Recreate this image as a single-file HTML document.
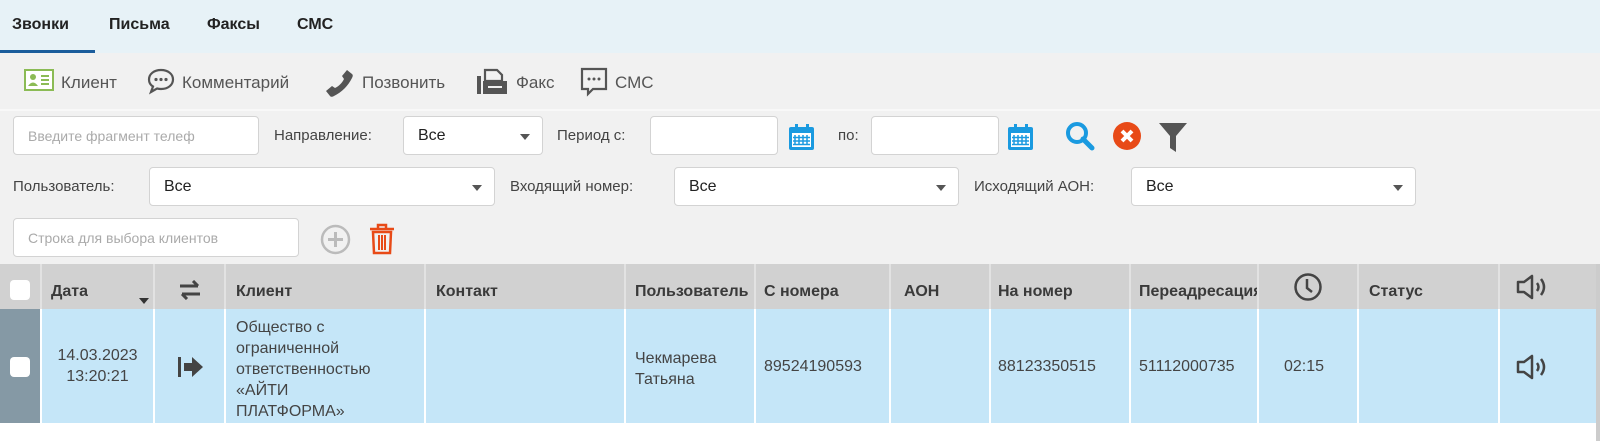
<!DOCTYPE html>
<html><head><meta charset="utf-8"><style>
*{box-sizing:border-box;margin:0;padding:0}
body{width:1600px;height:441px;overflow:hidden;background:#f1f1f1;font-family:"Liberation Sans",sans-serif;color:#333;position:relative}
.a{position:absolute}
.tabs{left:0;top:0;width:1600px;height:53px;background:#e7f2f7}
.tab{top:16px;font-weight:bold;font-size:16px;color:#222}
.tb{top:73px;font-size:17px;color:#555}
.inp{background:#fff;border:1px solid #d3d3d3;border-radius:4px;height:39px;font-size:14px;color:#aaa;padding:11px 14px;white-space:nowrap;overflow:hidden}
.sel{background:#fff;border:1px solid #d3d3d3;border-radius:4px;height:39px;font-size:16px;color:#222;padding:10px 14px}
.sel:after{content:"";position:absolute;right:12px;top:17px;border-left:5px solid transparent;border-right:5px solid transparent;border-top:6px solid #555}
.lbl{font-size:15px;color:#444}
.hd{top:264px;height:45px;background:#d1d1d1;left:0;width:1596px}
.row{top:309px;height:114px;background:#c5e6f8;left:0;width:1596px}
.vl{width:2px;background:#fff;top:309px;height:132px}
.hv{width:2px;background:#e2e2e2;top:264px;height:45px}
.h{top:283px;font-weight:bold;font-size:16px;color:#3a3a3a;white-space:nowrap;overflow:hidden}
.c{font-size:16px;color:#444;line-height:21px}
</style></head><body>
<div class="a tabs"></div>
<div class="a" style="left:0;top:50px;width:95px;height:3px;background:#1b5d9c"></div>
<div class="a tab" style="left:12px">Звонки</div>
<div class="a tab" style="left:109px">Письма</div>
<div class="a tab" style="left:207px">Факсы</div>
<div class="a tab" style="left:297px">СМС</div>

<svg class="a" style="left:24px;top:69px" width="30" height="22" viewBox="0 0 30 22"><rect x="1" y="1" width="28" height="20" fill="#fff" stroke="#8bbb55" stroke-width="2"/><circle cx="9" cy="8" r="3" fill="#8bbb55"/><path d="M4 17 q5-7 10 0z" fill="#8bbb55"/><path d="M17 7h8M17 11h8M17 15h8" stroke="#8bbb55" stroke-width="2"/></svg>
<div class="a tb" style="left:61px">Клиент</div>
<svg class="a" style="left:146px;top:67px" width="30" height="28" viewBox="0 0 30 28"><path d="M15 3C8 3 3 7 3 12.5c0 3 1.5 5.5 4 7L5 25l6-3.5c1.3.3 2.6.5 4 .5 7 0 12-4 12-9.5S22 3 15 3z" fill="none" stroke="#555" stroke-width="2.2"/><circle cx="10" cy="12.5" r="1.6" fill="#555"/><circle cx="15" cy="12.5" r="1.6" fill="#555"/><circle cx="20" cy="12.5" r="1.6" fill="#555"/></svg>
<div class="a tb" style="left:182px">Комментарий</div>
<svg class="a" style="left:325px;top:68px" width="30" height="30" viewBox="0 0 30 30"><path d="M22 2l5 4c1 1 1 2 0 4-4 8-10 14-18 18-2 1-3 1-4 0l-4-5 6-5 3 2c4-2 7-5 9-9l-2-3z" fill="#555"/></svg>
<div class="a tb" style="left:362px">Позвонить</div>
<svg class="a" style="left:476px;top:68px" width="32" height="28" viewBox="0 0 32 28"><rect x="1" y="8" width="4" height="18" fill="#555"/><path d="M9 2h12l5 5v6H9z" fill="none" stroke="#555" stroke-width="2.2"/><rect x="7" y="13" width="24" height="13" fill="#555"/><rect x="12" y="18" width="14" height="2" fill="#f1f1f1"/></svg>
<div class="a tb" style="left:516px">Факс</div>
<svg class="a" style="left:580px;top:67px" width="28" height="30" viewBox="0 0 28 30"><path d="M2 2h24v20H13l-5 5v-5H2z" fill="none" stroke="#555" stroke-width="2.2"/><circle cx="9" cy="12" r="1.5" fill="#555"/><circle cx="14" cy="12" r="1.5" fill="#555"/><circle cx="19" cy="12" r="1.5" fill="#555"/></svg>
<div class="a tb" style="left:615px">СМС</div>
<div class="a" style="left:0;top:109px;width:1600px;height:2px;background:#f8f8f8"></div>

<div class="a inp" style="left:13px;top:116px;width:246px">Введите фрагмент телеф</div>
<div class="a lbl" style="left:274px;top:127px">Направление:</div>
<div class="a sel" style="left:403px;top:116px;width:140px">Все</div>
<div class="a lbl" style="left:557px;top:127px">Период с:</div>
<div class="a inp" style="left:650px;top:116px;width:128px"></div>
<svg class="a" style="left:787px;top:122px" width="30" height="30" viewBox="0 0 30 30"><rect x="2" y="5" width="25" height="23" rx="2" fill="#1a9ae0"/><rect x="5" y="11" width="19" height="14" fill="#fff"/><path d="M8 13v10M12 13v10M16 13v10M20 13v10M6 15.5h17M6 19h17M6 22.5h17" stroke="#1a9ae0" stroke-width="1.5"/><rect x="8" y="2" width="3" height="6" fill="#1a9ae0"/><rect x="19" y="2" width="3" height="6" fill="#1a9ae0"/></svg>
<div class="a lbl" style="left:838px;top:127px">по:</div>
<div class="a inp" style="left:871px;top:116px;width:128px"></div>
<svg class="a" style="left:1006px;top:122px" width="30" height="30" viewBox="0 0 30 30"><rect x="2" y="5" width="25" height="23" rx="2" fill="#1a9ae0"/><rect x="5" y="11" width="19" height="14" fill="#fff"/><path d="M8 13v10M12 13v10M16 13v10M20 13v10M6 15.5h17M6 19h17M6 22.5h17" stroke="#1a9ae0" stroke-width="1.5"/><rect x="8" y="2" width="3" height="6" fill="#1a9ae0"/><rect x="19" y="2" width="3" height="6" fill="#1a9ae0"/></svg>
<svg class="a" style="left:1064px;top:120px" width="32" height="32" viewBox="0 0 32 32"><circle cx="13" cy="13" r="9" fill="none" stroke="#1a9ae0" stroke-width="4"/><path d="M19 19l9 9" stroke="#1a9ae0" stroke-width="5" stroke-linecap="round"/></svg>
<svg class="a" style="left:1112px;top:121px" width="30" height="30" viewBox="0 0 30 30"><circle cx="15" cy="15" r="14" fill="#e84a17"/><path d="M10 10l10 10M20 10l-10 10" stroke="#fff" stroke-width="4"/></svg>
<svg class="a" style="left:1157px;top:121px" width="32" height="32" viewBox="0 0 32 32"><path d="M2 2h28l-11 13v16l-6-4V15z" fill="#555"/></svg>

<div class="a lbl" style="left:13px;top:178px">Пользователь:</div>
<div class="a sel" style="left:149px;top:167px;width:346px">Все</div>
<div class="a lbl" style="left:510px;top:178px">Входящий номер:</div>
<div class="a sel" style="left:674px;top:167px;width:285px">Все</div>
<div class="a lbl" style="left:974px;top:178px">Исходящий АОН:</div>
<div class="a sel" style="left:1131px;top:167px;width:285px">Все</div>

<div class="a inp" style="left:13px;top:218px;width:286px">Строка для выбора клиентов</div>
<svg class="a" style="left:320px;top:224px" width="31" height="31" viewBox="0 0 31 31"><circle cx="15.5" cy="15.5" r="13.5" fill="none" stroke="#bbb" stroke-width="2.5"/><path d="M15.5 8v15M8 15.5h15" stroke="#bbb" stroke-width="3"/></svg>
<svg class="a" style="left:368px;top:223px" width="28" height="32" viewBox="0 0 28 32"><path d="M2 6h24M10 6V2h8v4" fill="none" stroke="#e84a17" stroke-width="2.5"/><path d="M5 9h18l-1 21H6z" fill="none" stroke="#e84a17" stroke-width="2.5"/><path d="M11 12v15M14 12v15M17 12v15" stroke="#e84a17" stroke-width="2"/></svg>

<div class="a hd"></div>
<div class="a row"></div>
<div class="a" style="left:0;top:309px;width:40px;height:114px;background:#8599a5"></div>
<div class="a" style="left:0;top:423px;width:1596px;height:18px;background:#fff"></div>
<div class="a" style="left:1596px;top:264px;width:4px;height:177px;background:#ccc"></div>
<div class="a vl" style="left:40px"></div><div class="a vl" style="left:153px"></div><div class="a vl" style="left:224px"></div><div class="a vl" style="left:424px"></div><div class="a vl" style="left:624px"></div><div class="a vl" style="left:754px"></div><div class="a vl" style="left:889px"></div><div class="a vl" style="left:989px"></div><div class="a vl" style="left:1129px"></div><div class="a vl" style="left:1257px"></div><div class="a vl" style="left:1357px"></div><div class="a vl" style="left:1498px"></div>
<div class="a hv" style="left:40px"></div><div class="a hv" style="left:153px"></div><div class="a hv" style="left:224px"></div><div class="a hv" style="left:424px"></div><div class="a hv" style="left:624px"></div><div class="a hv" style="left:754px"></div><div class="a hv" style="left:889px"></div><div class="a hv" style="left:989px"></div><div class="a hv" style="left:1129px"></div><div class="a hv" style="left:1257px"></div><div class="a hv" style="left:1357px"></div><div class="a hv" style="left:1498px"></div>
<div class="a" style="left:10px;top:280px;width:20px;height:20px;border-radius:4px;background:#fff"></div>
<div class="a" style="left:10px;top:357px;width:20px;height:20px;border-radius:4px;background:#fff"></div>
<div class="a h" style="left:51px">Дата</div>
<div class="a" style="left:139px;top:298px;border-left:5px solid transparent;border-right:5px solid transparent;border-top:6px solid #333"></div>
<svg class="a" style="left:178px;top:280px" width="24" height="20" viewBox="0 0 24 20"><path d="M2 6h18M15 1l5 5M22 14H4M9 19l-5-5" stroke="#444" stroke-width="3" fill="none"/></svg>
<div class="a h" style="left:236px">Клиент</div>
<div class="a h" style="left:436px">Контакт</div>
<div class="a h" style="left:635px;width:118px">Пользователь</div>
<div class="a h" style="left:764px">С номера</div>
<div class="a h" style="left:904px">АОН</div>
<div class="a h" style="left:998px">На номер</div>
<div class="a h" style="left:1139px;width:118px">Переадресация</div>
<svg class="a" style="left:1293px;top:272px" width="30" height="30" viewBox="0 0 30 30"><circle cx="15" cy="15" r="12.5" fill="none" stroke="#444" stroke-width="2.5"/><path d="M14 7v9l5 4" fill="none" stroke="#444" stroke-width="2.5"/></svg>
<div class="a h" style="left:1369px">Статус</div>
<svg class="a" style="left:1516px;top:274px" width="32" height="26" viewBox="0 0 32 26"><path d="M2 8h6l8-6v22l-8-6H2z" fill="none" stroke="#444" stroke-width="2.5" stroke-linejoin="round"/><path d="M21 9q3 4 0 8M25 5q6 8 0 16" fill="none" stroke="#444" stroke-width="2.5"/></svg>

<div class="a c" style="left:42px;top:345px;width:111px;text-align:center">14.03.2023<br>13:20:21</div>
<svg class="a" style="left:177px;top:355px" width="28" height="24" viewBox="0 0 28 24"><rect x="1" y="2" width="3" height="20" fill="#444"/><path d="M7 8h8V2l11 10-11 10v-6H7z" fill="#444"/></svg>
<div class="a c" style="left:236px;top:317px">Общество с<br>ограниченной<br>ответственностью<br>«АЙТИ<br>ПЛАТФОРМА»</div>
<div class="a c" style="left:635px;top:348px">Чекмарева<br>Татьяна</div>
<div class="a c" style="left:764px;top:356px">89524190593</div>
<div class="a c" style="left:998px;top:356px">88123350515</div>
<div class="a c" style="left:1139px;top:356px">51112000735</div>
<div class="a c" style="left:1284px;top:356px">02:15</div>
<svg class="a" style="left:1516px;top:354px" width="32" height="26" viewBox="0 0 32 26"><path d="M2 8h6l8-6v22l-8-6H2z" fill="none" stroke="#444" stroke-width="2.5" stroke-linejoin="round"/><path d="M21 9q3 4 0 8M25 5q6 8 0 16" fill="none" stroke="#444" stroke-width="2.5"/></svg>
</body></html>
